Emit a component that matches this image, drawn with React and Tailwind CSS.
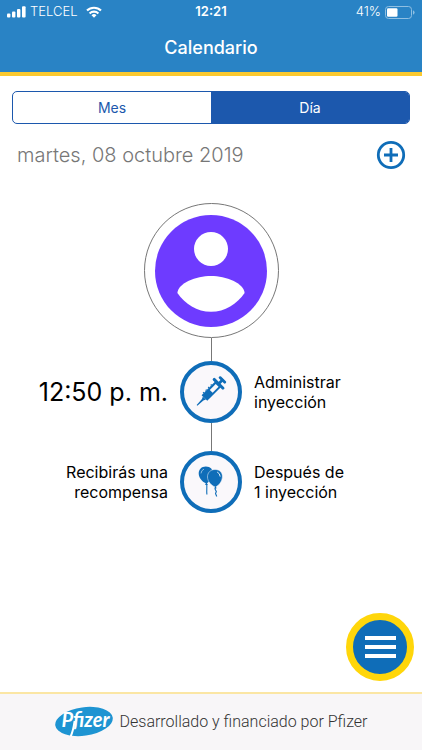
import React from "react";

function SignalIcon() {
  return (
    <svg viewBox="0 0 19 12" className="h-3 w-[19px]" fill="#fff" aria-hidden="true">
      <rect x="0" y="7.5" width="3.4" height="4" rx="1" />
      <rect x="5" y="5.5" width="3.4" height="6" rx="1" />
      <rect x="10" y="3" width="3.4" height="8.5" rx="1" />
      <rect x="15" y="0.3" width="3.6" height="11.2" rx="1" />
    </svg>
  );
}

function WifiIcon() {
  return (
    <svg viewBox="0 0 16 12" className="h-3 w-4" aria-hidden="true">
      <g fill="none" stroke="#fff" strokeWidth="2.1">
        <path d="M1 4.6 A10 10 0 0 1 15 4.6" />
        <path d="M3.6 7.4 A6.3 6.3 0 0 1 12.4 7.4" />
      </g>
      <path d="M5.5 9.2 A3.7 3.7 0 0 1 10.5 9.2 L8 11.8 Z" fill="#fff" />
    </svg>
  );
}

function BatteryIcon() {
  return (
    <svg viewBox="0 0 30 13" className="h-[13px] w-[30px]" aria-hidden="true">
      <rect x="0.5" y="0.5" width="26" height="12" rx="3" fill="none" stroke="#8fbfe2" />
      <rect x="2" y="2.2" width="10.5" height="8.6" rx="1.2" fill="#fff" />
      <path d="M28 4.3 Q29.6 5.2 29.6 6.5 Q29.6 7.8 28 8.7 Z" fill="#8fbfe2" />
    </svg>
  );
}

function SyringeIcon() {
  return (
    <svg viewBox="1 2 50 50" className="size-[50px]" aria-hidden="true">
      <g transform="translate(12 40.4) rotate(-45)" fill="#0f6db8">
        <path d="M0 -0.5 L8 -1 L10.5 -2.2 L10.5 2.2 L8 1 L0 0.5 Z" />
        <path d="M10.5 -4 H30 V4 H10.5 Z M20 -1.9 V2.1 H28.4 V-1.9 Z" fillRule="evenodd" />
        <path d="M13 -4 v-1 h1.4 v1 h2.2 v-1 h1.4 v1 h2.2 v-1 h1.4 v1 h2.2 v-1 h1.4 v1 Z" />
        <rect x="29" y="-7.6" width="3" height="15.2" rx="1.3" />
        <rect x="31" y="-1.4" width="6" height="2.8" />
        <rect x="34.6" y="-4.6" width="2.8" height="9.2" rx="1.2" />
      </g>
    </svg>
  );
}

function BalloonsIcon() {
  return (
    <svg viewBox="1 2 50 50" className="size-[50px]" aria-hidden="true">
      <path d="M20.8 11.6 C25.6 11.6 28.2 14.8 27.8 18.8 C27.4 23.4 24.4 26.8 22 28.2 L22.8 29.9 H20.1 L20.8 28.3 C17 26.8 13.7 22.8 13.7 18.6 C13.7 14.4 16.6 11.6 20.8 11.6 Z" fill="#0f6db8" />
      <path d="M21.7 29 C22.2 32.5 21.4 35 21.9 39.5" fill="none" stroke="#0f6db8" strokeWidth="1.1" />
      <path d="M30 14.5 C34.9 14.5 37.7 17.9 37.4 22 C37.1 26.6 33.9 30.3 31.1 31.7 L32.1 33.6 H28.9 L29.8 31.8 C26.2 30.4 22.6 26.6 22.5 22 C22.4 17.6 25.6 14.5 30 14.5 Z" fill="#0f6db8" stroke="#faf8fb" strokeWidth="0.5" />
      <path d="M30.5 33 C28.6 35 33 36 30.8 37.8 C29.8 39 31.6 39.6 31.6 41.5" fill="none" stroke="#0f6db8" strokeWidth="1.2" />
      <path d="M16 18.4 Q16.2 15.3 19 14.1" fill="none" stroke="#a9cde8" strokeWidth="0.8" />
      <path d="M32.2 17 Q35 18.4 35.2 21.6" fill="none" stroke="#e4f0f9" strokeWidth="1" />
    </svg>
  );
}

function PfizerLogo() {
  return (
    <svg viewBox="0 0 58 32" className="h-8 w-[58px]" role="img" aria-label="Pfizer">
      <ellipse cx="29" cy="15.5" rx="29" ry="14.2" transform="rotate(-8 29 15.5)" fill="#1e94d2" />
      <text
        x="30.5"
        y="20.5"
        textAnchor="middle"
        fontSize="20"
        fontWeight="700"
        fontStyle="italic"
        fill="#fff"
        className="font-[Lato,sans-serif]"
      >
        Pfizer
      </text>
      <path d="M19.6 15 C18.6 22 18.2 25 15.6 30.5" fill="none" stroke="#fff" strokeWidth="2" />
    </svg>
  );
}

function Avatar() {
  return (
    <div className="flex size-[135px] items-center justify-center rounded-full border border-[#777]">
      <svg viewBox="0 0 112 112" className="size-28" role="img" aria-label="Perfil">
        <circle cx="56" cy="56" r="56" fill="#6e3bff" />
        <circle cx="56" cy="34" r="17" fill="#fff" />
        <path d="M22.4 78 C23 68 41 61 56 61 C71 61 89 68 89.6 78 C82 89 70 96.8 56 96.8 C42 96.8 30 89 22.4 78 Z" fill="#fff" />
      </svg>
    </div>
  );
}

function TimelineRow({ left, right, children }) {
  return (
    <div className="grid w-full grid-cols-[1fr_62px_1fr] items-center gap-3">
      <div className="text-right">{left}</div>
      <div className="flex size-[62px] items-center justify-center rounded-full border-4 border-[#0f6db8] bg-[#faf8fb]">
        {children}
      </div>
      <p className="text-base leading-5">{right}</p>
    </div>
  );
}

export default function App() {
  return (
    <div className="flex min-h-screen flex-col bg-white font-[Inter,sans-serif] text-black">
      <header className="border-b-4 border-[#fbc92f] bg-[#2983c5] text-white">
        <div className="grid h-6 grid-cols-3 items-center px-[7px] text-[13px]">
          <div className="flex items-center gap-1">
            <SignalIcon />
            <span className="font-light">TELCEL</span>
            <span className="pl-1">
              <WifiIcon />
            </span>
          </div>
          <span className="text-center font-semibold">12:21</span>
          <div className="flex items-center justify-end gap-1">
            <span className="font-light">41%</span>
            <BatteryIcon />
          </div>
        </div>
        <h1 className="flex h-12 items-center justify-center text-lg font-medium">Calendario</h1>
      </header>

      <main className="relative flex flex-1 flex-col">
        <div className="mx-3 mt-[15px] grid h-[33px] grid-cols-2 overflow-hidden rounded-[5px] border border-[#1c58ad] text-sm">
          <button type="button" className="text-[#1c58ad]">Mes</button>
          <button type="button" className="bg-[#1c58ad] text-white">Día</button>
        </div>

        <div className="mt-4 flex items-center justify-between pr-4 pl-[17px]">
          <p className="text-xl font-light text-[#777]">martes, 08 octubre 2019</p>
          <button type="button" aria-label="Añadir">
            <svg viewBox="0 0 30 30" className="size-[30px]" fill="none" stroke="#0f6db8" strokeWidth="2.8" aria-hidden="true">
              <circle cx="15" cy="15" r="12.7" />
              <path d="M15 8 V22 M8 15 H22" />
            </svg>
          </button>
        </div>

        <section className="mt-[33px] flex flex-col items-center">
          <Avatar />
          <div className="h-[23px] w-px bg-[#777]" />
          <TimelineRow
            left={<time className="text-[25px] leading-8">12:50 p. m.</time>}
            right={<>Administrar<br />inyección</>}
          >
            <SyringeIcon />
          </TimelineRow>
          <div className="h-7 w-px bg-[#777]" />
          <TimelineRow
            left={<p className="text-base leading-5">Recibirás una<br />recompensa</p>}
            right={<>Después de<br />1 inyección</>}
          >
            <BalloonsIcon />
          </TimelineRow>
        </section>

        <button
          type="button"
          aria-label="Menú"
          className="absolute right-2 bottom-[11px] flex size-[68px] flex-col items-center justify-center gap-[5px] rounded-full border-[7px] border-[#ffd60a] bg-[#0f6db8]"
        >
          <span className="h-1 w-[31px] bg-white" />
          <span className="h-1 w-[31px] bg-white" />
          <span className="h-1 w-[31px] bg-white" />
        </button>
      </main>

      <footer className="flex h-[58px] items-center justify-center gap-[7px] border-t-2 border-[#fbe6a4] bg-[#f8f6f8]">
        <PfizerLogo />
        <p className="font-[Roboto,sans-serif] text-base font-light text-[#333]">Desarrollado y financiado por Pfizer</p>
      </footer>
    </div>
  );
}
